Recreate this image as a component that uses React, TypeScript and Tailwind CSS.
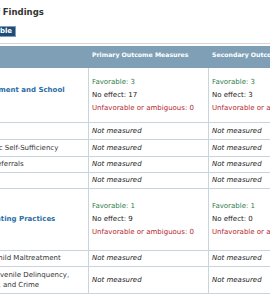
import React from "react";

type Counts = { fav: number; none: number; unf: number };

type Row = {
  label: string;
  h: string;
  strong?: boolean;
  primary?: Counts;
  secondary?: Counts;
};

const rows: Row[] = [
  {
    label: "Child Development and School Readiness",
    h: "h-[55px]",
    strong: true,
    primary: { fav: 3, none: 17, unf: 0 },
    secondary: { fav: 3, none: 3, unf: 0 },
  },
  { label: "Child Health", h: "h-[17px]" },
  { label: "Family Economic Self-Sufficiency", h: "h-[17px]" },
  { label: "Linkages and Referrals", h: "h-[16px]" },
  { label: "Maternal Health", h: "h-[16px]" },
  {
    label: "Positive Parenting Practices",
    h: "h-[62px]",
    strong: true,
    primary: { fav: 1, none: 9, unf: 0 },
    secondary: { fav: 1, none: 0, unf: 0 },
  },
  { label: "Reductions in Child Maltreatment", h: "h-[16px]" },
  {
    label: "Reductions in Juvenile Delinquency, Family Violence, and Crime",
    h: "h-[27px]",
  },
];

function Result({ data, h }: { data?: Counts; h: string }) {
  return (
    <div
      className={`${h} flex items-center border-b border-r border-[#c8d4de] px-[3px]`}
    >
      {data ? (
        <div className="flex flex-col gap-[2.5px] leading-[10.5px]">
          <span className="text-[#2f7d4c]">Favorable: {data.fav}</span>
          <span className="text-[#222]">No effect: {data.none}</span>
          <span className="whitespace-nowrap text-[#b3262c]">
            Unfavorable or ambiguous: {data.unf}
          </span>
        </div>
      ) : (
        <span className="italic leading-[10.5px] text-[#222]">Not measured</span>
      )}
    </div>
  );
}

export default function App() {
  return (
    <div className="h-[300px] w-[270px] overflow-hidden bg-white font-['DejaVu_Sans',sans-serif] text-[7px]">
      <div className="ml-[-59px] w-[420px]">
        <h2 className="pl-[1px] pt-[6px] text-[8.5px] font-bold leading-[12px] text-[#333]">
          Summary of Findings
        </h2>
        <button className="ml-[25px] mt-[8px] flex h-[11px] items-center border border-[#7f9cb8] bg-[#1d4c78] px-[3px] text-[7px] font-bold leading-[9px] text-white">
          View Table
        </button>

        <div className="mt-[6px] h-px bg-[#d6d6d6]" />

        <div className="mt-[2px] grid grid-cols-[148px_120px_152px]">
          <div className="h-[22px] bg-[#7e9fb6]" />
          <div className="flex h-[22px] items-start bg-[#7e9fb6] px-[3px] pt-[5px] text-[6.2px] font-bold leading-[8px] text-white">
            Primary Outcome Measures
          </div>
          <div className="flex h-[22px] items-start bg-[#7e9fb6] px-[3px] pt-[5px] text-[6.2px] font-bold leading-[8px] text-white">
            Secondary Outcome Measures
          </div>

          {rows.map((r) => (
            <React.Fragment key={r.label}>
              <div
                className={`${r.h} flex items-center border-b border-r border-[#c8d4de] pl-[3px] pr-[4px] leading-[10.5px] ${
                  r.strong ? "font-bold text-[#2b6da5]" : "text-[#333]"
                }`}
              >
                {r.label}
              </div>
              <Result data={r.primary} h={r.h} />
              <Result data={r.secondary} h={r.h} />
            </React.Fragment>
          ))}
        </div>
      </div>
    </div>
  );
}
